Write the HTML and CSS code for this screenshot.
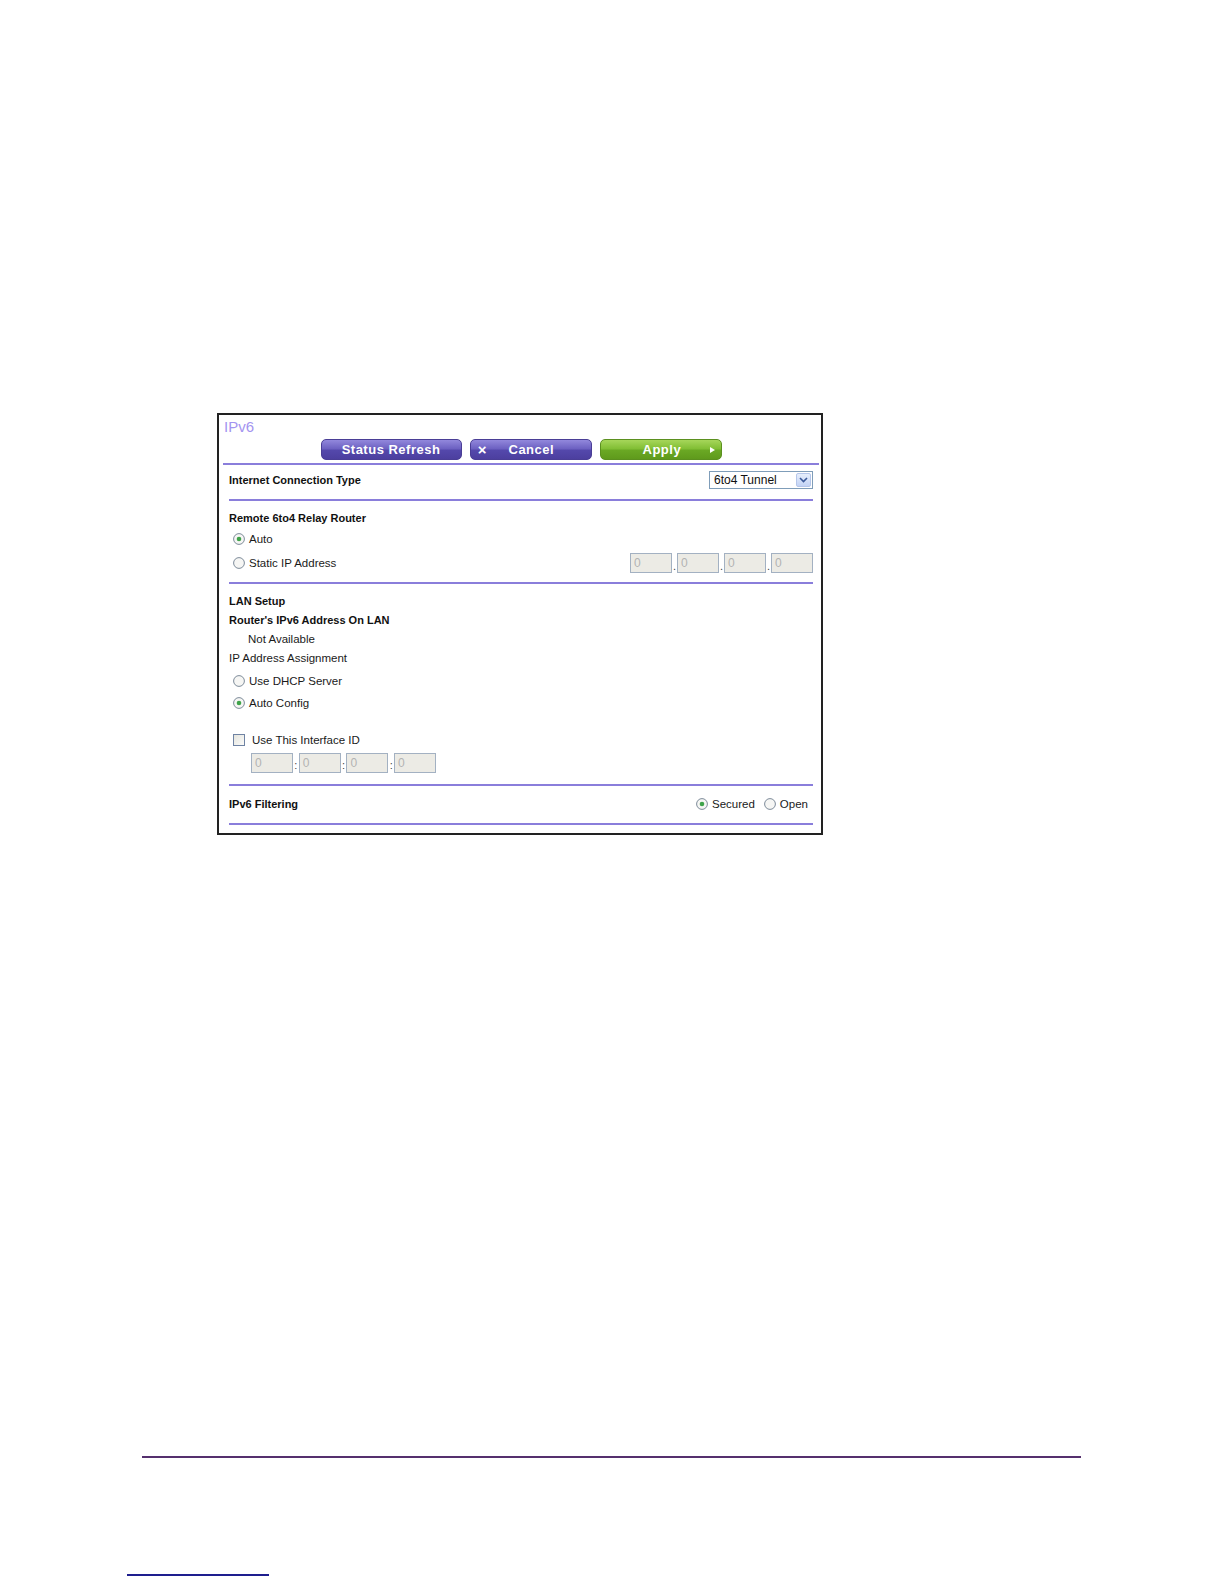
FILE: index.html
```html
<!DOCTYPE html>
<html>
<head>
<meta charset="utf-8">
<title>IPv6</title>
<link rel="stylesheet" href="styles.css">
</head>
<body>
<div class="page">
  <div class="frame">
    <div class="title">IPv6</div>
    <div class="buttons">
      <div class="btn btn-purple btn-refresh">Status Refresh</div>
      <div class="btn btn-purple btn-cancel"><span class="x">&#215;</span><span class="btn-label">Cancel</span></div>
      <div class="btn btn-green btn-apply"><span class="btn-label">Apply</span><span class="tri"></span></div>
    </div>
    <div class="rule rule-top"></div>
    <div class="content">
      <div class="row-ict">
        <span class="label">Internet Connection Type</span>
        <div class="select">
          <span class="select-text">6to4 Tunnel</span>
          <span class="select-btn">
            <svg width="9" height="6" viewBox="0 0 9 6"><path d="M1 1 L4.5 4.5 L8 1" fill="none" stroke="#3b5a9a" stroke-width="1.6"/></svg>
          </span>
        </div>
      </div>
      <div class="rule"></div>

      <div class="label sec-title">Remote 6to4 Relay Router</div>
      <div class="opt opt-auto">
        <svg class="radio" width="12" height="12" viewBox="0 0 12 12"><circle cx="6" cy="6" r="5.4" fill="#f6f6f4" stroke="#7d8b99" stroke-width="1"/><circle cx="6" cy="6" r="2.3" fill="#3fa34a"/></svg>
        <span>Auto</span>
      </div>
      <div class="row-static">
        <div class="opt">
          <svg class="radio" width="12" height="12" viewBox="0 0 12 12"><circle cx="6" cy="6" r="5.4" fill="#f6f6f4" stroke="#7d8b99" stroke-width="1"/></svg>
          <span>Static IP Address</span>
        </div>
        <div class="ipgroup">
          <span class="ipbox">0</span><span class="sep">.</span><span class="ipbox">0</span><span class="sep">.</span><span class="ipbox">0</span><span class="sep">.</span><span class="ipbox">0</span>
        </div>
      </div>
      <div class="rule rule-3"></div>

      <div class="label line19 lan-title">LAN Setup</div>
      <div class="label line19">Router's IPv6 Address On LAN</div>
      <div class="text line19 indent">Not Available</div>
      <div class="text line19">IP Address Assignment</div>
      <div class="opt opt-dhcp">
        <svg class="radio" width="12" height="12" viewBox="0 0 12 12"><circle cx="6" cy="6" r="5.4" fill="#f6f6f4" stroke="#7d8b99" stroke-width="1"/></svg>
        <span>Use DHCP Server</span>
      </div>
      <div class="opt opt-autoconf">
        <svg class="radio" width="12" height="12" viewBox="0 0 12 12"><circle cx="6" cy="6" r="5.4" fill="#f6f6f4" stroke="#7d8b99" stroke-width="1"/><circle cx="6" cy="6" r="2.3" fill="#3fa34a"/></svg>
        <span>Auto Config</span>
      </div>
      <div class="opt opt-check">
        <span class="checkbox"></span>
        <span>Use This Interface ID</span>
      </div>
      <div class="ipgroup ifgroup">
        <span class="ipbox">0</span><span class="sep sep-if">:</span><span class="ipbox">0</span><span class="sep sep-if">:</span><span class="ipbox">0</span><span class="sep sep-if">:</span><span class="ipbox">0</span>
      </div>
      <div class="rule rule-4"></div>

      <div class="row-filter">
        <span class="label">IPv6 Filtering</span>
        <div class="filter-opts">
          <div class="opt opt-inline">
            <svg class="radio" width="12" height="12" viewBox="0 0 12 12"><circle cx="6" cy="6" r="5.4" fill="#f6f6f4" stroke="#7d8b99" stroke-width="1"/><circle cx="6" cy="6" r="2.3" fill="#3fa34a"/></svg>
            <span>Secured</span>
          </div>
          <div class="opt opt-inline opt-open">
            <svg class="radio" width="12" height="12" viewBox="0 0 12 12"><circle cx="6" cy="6" r="5.4" fill="#f6f6f4" stroke="#7d8b99" stroke-width="1"/></svg>
            <span>Open</span>
          </div>
        </div>
      </div>
      <div class="rule rule-5"></div>
    </div>
  </div>
  <div class="footer-rule"></div>
  <div class="footer-link"></div>
</div>
</body>
</html>
```

FILE: styles.css
```css
html, body {
  margin: 0;
  padding: 0;
  background: #ffffff;
}

body {
  font-family: "Liberation Sans", Arial, sans-serif;
  color: #1a1a1a;
}

.page {
  width: 1224px;
  height: 1584px;
  padding-top: 413px;
  box-sizing: border-box;
  overflow: hidden;
}

.frame {
  margin-left: 217px;
  width: 606px;
  box-sizing: border-box;
  border: 2px solid #222222;
  padding: 0 2px 8px 4px;
}

.title {
  height: 24px;
  line-height: 24px;
  font-size: 15px;
  color: #a394f0;
  padding-left: 1px;
}

.buttons {
  display: flex;
  justify-content: center;
  gap: 8px;
  height: 21px;
}

.btn {
  height: 21px;
  box-sizing: border-box;
  border-radius: 5px;
  color: #ffffff;
  font-weight: bold;
  font-size: 13px;
  letter-spacing: 0.5px;
  display: flex;
  align-items: center;
  justify-content: center;
}

.btn-purple {
  background: linear-gradient(#9288dc, #6d61c2 45%, #5448ab 55%, #4c3f9f);
  border: 1px solid #4a3e96;
}

.btn-green {
  background: linear-gradient(#a6d65a, #82bf35 45%, #6aa824 55%, #5f9a1c);
  border: 1px solid #5b901f;
}

.btn-refresh {
  width: 141px;
}

.btn-cancel {
  width: 122px;
  justify-content: flex-start;
  padding-left: 6px;
}

.btn-cancel .x {
  font-size: 15px;
  width: 12px;
  text-align: center;
}

.btn-cancel .btn-label {
  margin-left: 20px;
}

.btn-apply {
  width: 122px;
  justify-content: flex-start;
  padding-left: 42px;
}

.btn-apply .tri {
  margin-left: 29px;
  width: 0;
  height: 0;
  border-top: 3px solid transparent;
  border-bottom: 3px solid transparent;
  border-left: 5px solid #ffffff;
}

.rule {
  height: 2px;
  background: #8a7edb;
}

.rule-top {
  margin-top: 3px;
}

.content {
  padding: 0 6px;
}

.label {
  font-weight: bold;
  font-size: 11px;
  color: #111111;
}

.text {
  font-size: 11.5px;
  color: #1a1a1a;
}

.row-ict {
  display: flex;
  justify-content: space-between;
  align-items: center;
  height: 18px;
  margin-top: 6px;
  margin-bottom: 10px;
}

.select {
  width: 104px;
  height: 18px;
  box-sizing: border-box;
  border: 1px solid #7f9db9;
  background: #ffffff;
  display: flex;
  align-items: center;
  justify-content: space-between;
  padding: 0 1px 0 4px;
}

.select-text {
  font-size: 12px;
  color: #111111;
}

.select-btn {
  width: 15px;
  height: 14px;
  box-sizing: border-box;
  border: 1px solid #b5c6ea;
  border-radius: 2px;
  background: linear-gradient(#e6eefc, #c3d3f5);
  display: flex;
  align-items: center;
  justify-content: center;
}

.sec-title {
  line-height: 16px;
  margin-top: 9px;
}

.opt {
  display: flex;
  align-items: center;
  height: 16px;
  margin-left: 4px;
  font-size: 11.5px;
  color: #1a1a1a;
}

.radio {
  flex: none;
  margin-right: 4px;
}

.opt-auto {
  margin-top: 5px;
}

.row-static {
  display: flex;
  justify-content: space-between;
  align-items: center;
  height: 20px;
  margin-top: 6px;
}

.ipgroup {
  display: flex;
  align-items: flex-end;
  height: 20px;
}

.ipbox {
  width: 42px;
  height: 20px;
  box-sizing: border-box;
  border: 1px solid #a3b1c2;
  background: #ecebe5;
  color: #b3b3b3;
  font-size: 12px;
  line-height: 18px;
  padding-left: 3px;
}

.sep {
  width: 5px;
  text-align: center;
  font-size: 11px;
  line-height: 14px;
  color: #444444;
}

.sep-if {
  width: 5.7px;
  line-height: 16px;
}

.rule-3 {
  margin-top: 9px;
}

.line19 {
  line-height: 19px;
}

.lan-title {
  margin-top: 8px;
}

.indent {
  padding-left: 19px;
}

.opt-dhcp {
  margin-top: 5px;
}

.opt-autoconf {
  margin-top: 6px;
}

.opt-check {
  margin-top: 21px;
}

.checkbox {
  flex: none;
  width: 12px;
  height: 12px;
  box-sizing: border-box;
  border: 1px solid #6f83a3;
  background: linear-gradient(135deg, #e4e4de, #fbfbf9);
  margin-right: 7px;
}

.ifgroup {
  margin-top: 5px;
  margin-left: 22px;
}

.rule-4 {
  margin-top: 11px;
}

.row-filter {
  display: flex;
  justify-content: space-between;
  align-items: center;
  height: 18px;
  margin-top: 9px;
}

.filter-opts {
  display: flex;
  align-items: center;
  margin-right: 5px;
}

.opt-inline {
  margin-left: 0;
}

.opt-open {
  margin-left: 9px;
}

.rule-5 {
  margin-top: 10px;
}

.footer-rule {
  margin-top: 621px;
  margin-left: 142px;
  width: 939px;
  height: 2px;
  background: #55306e;
}

.footer-link {
  margin-top: 116px;
  margin-left: 127px;
  width: 142px;
  height: 2px;
  background: #1e1e8e;
}
```
